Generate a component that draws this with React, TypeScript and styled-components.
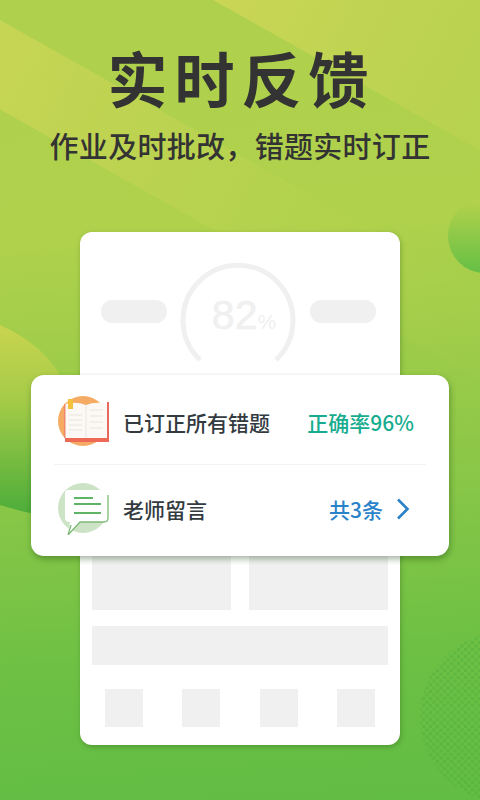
import styled, { createGlobalStyle } from 'styled-components'

const INK = '#333333'
const GHOST = '#f0f0f0'
const CJK = `"Noto Sans CJK SC", "Liberation Sans", sans-serif`

const GlobalStyle = createGlobalStyle`
  html, body {
    margin: 0;
    padding: 0;
  }
  body {
    font-family: ${CJK};
  }
`

const Page = styled.div`
  position: relative;
  width: 480px;
  height: 800px;
  overflow: hidden;
  box-sizing: border-box;
  padding-top: 37px;
  display: flex;
  flex-direction: column;
  align-items: center;
  background: linear-gradient(176deg, #aed04c 0, #afd14c 30%, #90c848 56%, #6cc044 82%, #62bd44 100%);
`

// light diagonal stripes of the backdrop, all at the same slope
const Band = styled.div`
  position: absolute;
  transform: rotate(29.4deg);
`

const CornerBand = styled(Band)`
  left: 213px;
  top: -300px;
  width: 400px;
  height: 300px;
  transform-origin: 0 100%;
  background: linear-gradient(90deg, rgba(216, 216, 90, 0.65), rgba(190, 212, 80, 0.12));
`

const MiddleBand = styled(Band)`
  left: 0;
  top: 20px;
  width: 600px;
  height: 78px;
  transform-origin: 0 0;
  background: linear-gradient(90deg, rgba(216, 216, 90, 0.6), rgba(196, 214, 82, 0.12) 60%, rgba(196, 214, 82, 0.03));
`

const LeftBlob = styled.svg`
  position: absolute;
  left: 0;
  top: 320px;
`

const RightBlob = styled.div`
  position: absolute;
  left: 448px;
  top: 199px;
  width: 74px;
  height: 74px;
  border-radius: 50%;
  background: linear-gradient(180deg, #b6d24c 0%, #65bf45 100%);
`

const DotBlob = styled.div`
  position: absolute;
  left: 420px;
  top: 632px;
  width: 170px;
  height: 170px;
  border-radius: 50%;
  opacity: 0.42;
  background-image:
    radial-gradient(circle, #4fae3e 1.4px, transparent 2px),
    radial-gradient(circle, #4fae3e 1.4px, transparent 2px);
  background-size: 7px 7px;
  background-position: 0 0, 3.5px 3.5px;
`

const Title = styled.h1`
  position: relative;
  margin: 0 0 0 3px;
  font-size: 60px;
  line-height: 80px;
  font-weight: 700;
  letter-spacing: 7px;
  color: ${INK};
`

const Subtitle = styled.p`
  position: relative;
  margin: 8px 0 0;
  font-size: 29px;
  line-height: 40px;
  font-weight: 500;
  letter-spacing: 0.3px;
  color: ${INK};
`

const Stage = styled.div`
  position: relative;
  margin-top: 67px;
  width: 320px;
`

const Phone = styled.div`
  box-sizing: border-box;
  width: 320px;
  height: 513px;
  padding: 31px 12px 0;
  background: #fff;
  border-radius: 12px;
  box-shadow: 1px 2px 5px rgba(40, 90, 20, 0.35);
`

const HeaderRow = styled.div`
  display: flex;
  justify-content: space-between;
  padding: 0 12px 0 9px;
  height: 293px;
`

const Pill = styled.div`
  margin-top: 37px;
  width: 66px;
  height: 23px;
  border-radius: 12px;
  background: ${GHOST};
`

const Gauge = styled.svg`
  position: absolute;
  left: 99px;
  top: 29px;
`

const GaugeText = styled.div`
  position: absolute;
  left: 99px;
  top: 58px;
  width: 118px;
  padding-left: 12px;
  box-sizing: border-box;
  text-align: center;
  font-family: "Liberation Sans", sans-serif;
  font-size: 41px;
  line-height: 50px;
  font-weight: 400;
  color: ${GHOST};
  white-space: nowrap;
  -webkit-text-stroke: 0.6px ${GHOST};

  span {
    font-size: 21px;
    -webkit-text-stroke: 0;
  }
`

const TileRow = styled.div`
  display: flex;
  gap: 18px;
  margin-top: -1px;
`

const Tile = styled.div`
  flex: 1;
  height: 55px;
  background: ${GHOST};
`

const Bar = styled.div`
  height: 39px;
  margin-top: 16px;
  background: ${GHOST};
`

const SquareRow = styled.div`
  display: flex;
  justify-content: space-between;
  padding: 0 13px;
  margin-top: 24px;
`

const Square = styled.div`
  width: 38px;
  height: 38px;
  background: ${GHOST};
`

const FloatCard = styled.div`
  position: absolute;
  left: -49px;
  top: 143px;
  width: 418px;
  height: 181px;
  box-sizing: border-box;
  padding: 0 23px;
  background: #fff;
  border-radius: 13px;
  box-shadow: 1px 3px 6px rgba(30, 70, 20, 0.4);
`

const Row = styled.div<{ $divided?: boolean }>`
  display: flex;
  align-items: center;
  height: 90px;
  box-sizing: border-box;
  padding: ${p => (p.$divided ? '5px 12px 0 4px' : '0 16px 3px 4px')};
  border-bottom: ${p => (p.$divided ? '1px solid #f3f3f3' : 'none')};
`

const IconSlot = styled.div`
  width: 52px;
  height: 52px;
  margin-right: 13px;
  flex: none;
`

const Label = styled.div`
  flex: 1;
  font-size: 21px;
  font-weight: 500;
  color: #333a40;
`

const Value = styled.div<{ $color: string }>`
  display: flex;
  align-items: center;
  gap: 13px;
  font-size: 21px;
  font-weight: 500;
  color: ${p => p.$color};
`

const BookIcon = () => (
  <svg width="52" height="52" viewBox="0 0 52 52">
    <circle cx="25" cy="25" r="25" fill="#f5ab63" />
    <path d="M7 41H51V46H7Z" fill="#ef6a56" />
    <path d="M7 8Q18 5 28 9Q38 5 49 8V42H7Z" fill="#fbf8f5" />
    <path d="M28 9V42" stroke="#ebe6e0" strokeWidth="1" />
    <path d="M49 6H51V42H49Z" fill="#e8695c" />
    <path d="M6 8H7.500V42H6Z" fill="#f08a6c" />
    <path d="M10 3H15V13H10Z" fill="#f3c13d" />
    <path d="M11 19H24M11 24H24M11 29H24M11 34H24M32 14H45M32 20H45M32 26H45M32 32H45" stroke="#efebe6" strokeWidth="1.500" />
  </svg>
)

const NoteIcon = () => (
  <svg width="52" height="52" viewBox="0 0 52 52">
    <circle cx="25" cy="25" r="25" fill="#cde3c6" />
    <path d="M10 7H47Q50 7 50 10V35Q50 39 46 39H22L10 52 12 39Q7 39 7 35V10Q7 7 10 7Z" fill="#fff" />
    <path d="M50 12V35Q50 39 46 39H22L10 52 13 42" fill="none" stroke="#7dbb76" strokeWidth="1.300" />
    <path d="M16 15H35M16 21H43M16 30H43" stroke="#5fb465" strokeWidth="2" />
  </svg>
)

const Chevron = () => (
  <svg width="14" height="22" viewBox="0 0 14 22">
    <path d="M2 1.500 11.500 11 2 20.500" fill="none" stroke="#2a82c9" strokeWidth="2.600" />
  </svg>
)

const App = () => (
  <Page>
    <GlobalStyle />
    <CornerBand />
    <MiddleBand />
    <LeftBlob width="80" height="200" viewBox="0 0 80 200">
      <defs>
        <linearGradient id="blob" x1="0" y1="0" x2="0" y2="1">
          <stop offset="0" stopColor="#c9d44f" />
          <stop offset="0.4" stopColor="#a4cb48" />
          <stop offset="1" stopColor="#4cad3a" />
        </linearGradient>
      </defs>
      <path d="M0 5C22 15 45 30 60 55V195L30 193C20 191 10 188 0 185Z" fill="url(#blob)" />
    </LeftBlob>
    <RightBlob />
    <DotBlob />
    <Title>实时反馈</Title>
    <Subtitle>作业及时批改，错题实时订正</Subtitle>
    <Stage>
      <Phone>
        <HeaderRow>
          <Pill />
          <Pill />
        </HeaderRow>
        <TileRow>
          <Tile />
          <Tile />
        </TileRow>
        <Bar />
        <SquareRow>
          <Square />
          <Square />
          <Square />
          <Square />
        </SquareRow>
      </Phone>
      <Gauge width="118" height="110" viewBox="0 0 118 110">
        <path d="M21 99 A55 55 0 1 1 97 99" fill="none" stroke={GHOST} strokeWidth="5" />
      </Gauge>
      <GaugeText>82<span>%</span></GaugeText>
      <FloatCard>
        <Row $divided>
          <IconSlot><BookIcon /></IconSlot>
          <Label>已订正所有错题</Label>
          <Value $color="#17ac8f">正确率96%</Value>
        </Row>
        <Row>
          <IconSlot><NoteIcon /></IconSlot>
          <Label>老师留言</Label>
          <Value $color="#2a82c9">共3条<Chevron /></Value>
        </Row>
      </FloatCard>
    </Stage>
  </Page>
)

export default App
